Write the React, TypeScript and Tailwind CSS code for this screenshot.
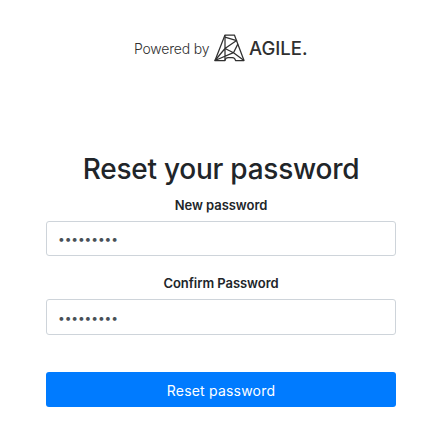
import { useState } from "react";

type PasswordFieldProps = {
  id: string;
  label: string;
  value: string;
  onChange: (value: string) => void;
  className: string;
  inputClassName: string;
};

function AgileMark() {
  return (
    <svg
      className="h-[28px] w-[31px] shrink-0"
      viewBox="0 0 31 28"
      fill="none"
      stroke="#303030"
      strokeWidth="1.25"
      strokeLinejoin="round"
      aria-hidden="true"
    >
      <path d="M11 1h9.4L30 26.5h-8.5q-.5-3-3.2-3h-4.1q-2.7 0-3.2 3H1z" />
      <path d="M11 1v25.5M11 3.2l11.6 3.4L11 14.5l8.5 4.2L30 26.5M11 14.5L1 26.5l18.5-7.8 4.3-8.6" />
    </svg>
  );
}

function PasswordField({ id, label, value, onChange, className, inputClassName }: PasswordFieldProps) {
  return (
    <div className={`flex flex-col ${className}`}>
      <label htmlFor={id} className="text-center text-[13px] leading-5 font-semibold tracking-[-0.05px] text-[#212529]">
        {label}
      </label>
      <input
        id={id}
        type="password"
        value={value}
        onChange={(event) => onChange(event.target.value)}
        className={`mt-[6px] rounded-[3px] border border-[#ced4da] bg-white pr-3 pl-[11px] text-[12px] tracking-[-0.1px] text-[#495057] outline-none ${inputClassName}`}
      />
    </div>
  );
}

export default function App() {
  const [password, setPassword] = useState("agile1234");
  const [confirmation, setConfirmation] = useState("agile1234");

  return (
    <main className="h-[430px] w-[445px] bg-white pt-[34px] pr-[49px] pl-[46px] font-['Inter',sans-serif] text-[#212529]">
      <header className="ml-[88px] flex h-[28px] items-center text-[#303030]">
        <span className="w-[80px] pt-px text-[14px] leading-5 font-light tracking-[-0.2px] whitespace-nowrap">
          Powered by
        </span>
        <AgileMark />
        <span className="ml-[4px] text-[18.5px] leading-6 font-medium">AGILE.</span>
      </header>

      <form className="mt-[89px] flex flex-col" onSubmit={(event) => event.preventDefault()}>
        <h1 className="text-center text-[28px] leading-[36px] font-medium tracking-[-0.25px] whitespace-nowrap">
          Reset your password
        </h1>
        <PasswordField
          id="new"
          label="New password"
          value={password}
          onChange={setPassword}
          className="mt-[8px]"
          inputClassName="h-[35px]"
        />
        <PasswordField
          id="confirm"
          label="Confirm Password"
          value={confirmation}
          onChange={setConfirmation}
          className="mt-[17px]"
          inputClassName="h-[36px] pt-px"
        />
        <button
          type="submit"
          className="mt-[37px] h-[35px] rounded-[3px] bg-[#007bff] pt-px text-[14px] tracking-[0.2px] text-white"
        >
          Reset password
        </button>
      </form>
    </main>
  );
}
